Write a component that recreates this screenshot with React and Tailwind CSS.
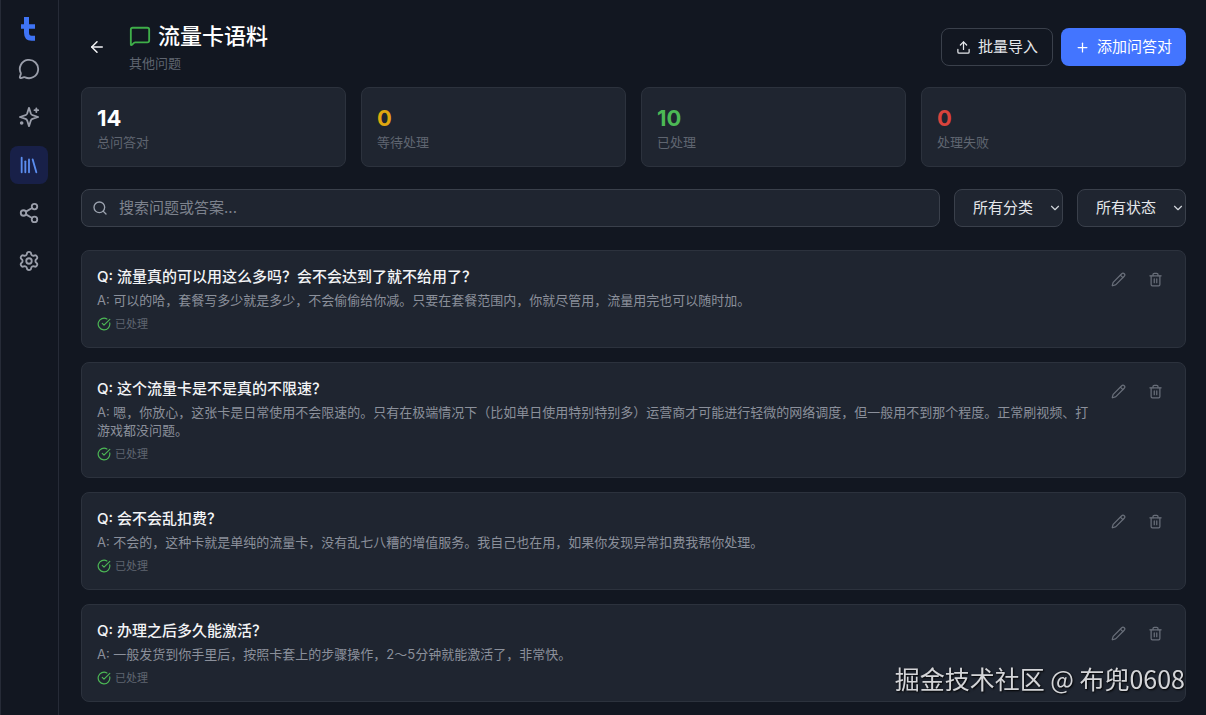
import { useState } from 'react';
import {
  ArrowLeft,
  CircleCheckBig,
  Library,
  MessageCircle,
  MessageSquare,
  Pencil,
  Plus,
  Search,
  Settings,
  Share2,
  Trash2,
  Upload,
  ChevronDown,
} from 'lucide-react';

function SparkIcon({ size = 24 }) {
  return (
    <svg
      width={size}
      height={size}
      viewBox="0 0 24 24"
      fill="none"
      stroke="currentColor"
      strokeWidth="2"
      strokeLinecap="round"
      strokeLinejoin="round"
    >
      <path d="M12 2l-2 6.200a3 3 0 0 1-1.800 1.800L2 12l6.200 2a3 3 0 0 1 1.800 1.800L12 22l2-6.200a3 3 0 0 1 1.800-1.800L22 12l-6.200-2a3 3 0 0 1-1.800-1.800Z" />
      <path d="M20 2.500v4M18 4.500h4" />
      <circle cx="4" cy="18.500" r="1" />
    </svg>
  );
}

const NAV = [
  { id: 'chat', label: '聊天', icon: MessageCircle },
  { id: 'explore', label: '探索', icon: SparkIcon },
  { id: 'library', label: '语料库', icon: Library },
  { id: 'share', label: '分享', icon: Share2 },
  { id: 'settings', label: '设置', icon: Settings },
];

const STATS = [
  { label: '总问答对', value: 14, color: 'text-white' },
  { label: '等待处理', value: 0, color: 'text-[#dfa70f]' },
  { label: '已处理', value: 10, color: 'text-[#4cb855]' },
  { label: '处理失败', value: 0, color: 'text-[#d9433c]' },
];

const PAIRS = [
  {
    id: 1,
    q: '流量真的可以用这么多吗？会不会达到了就不给用了？',
    a: '可以的哈，套餐写多少就是多少，不会偷偷给你减。只要在套餐范围内，你就尽管用，流量用完也可以随时加。',
  },
  {
    id: 2,
    q: '这个流量卡是不是真的不限速？',
    a: '嗯，你放心，这张卡是日常使用不会限速的。只有在极端情况下（比如单日使用特别特别多）运营商才可能进行轻微的网络调度，但一般用不到那个程度。正常刷视频、打游戏都没问题。',
  },
  {
    id: 3,
    q: '会不会乱扣费？',
    a: '不会的，这种卡就是单纯的流量卡，没有乱七八糟的增值服务。我自己也在用，如果你发现异常扣费我帮你处理。',
  },
  {
    id: 4,
    q: '办理之后多久能激活？',
    a: '一般发货到你手里后，按照卡套上的步骤操作，2～5分钟就能激活了，非常快。',
  },
];

function Logo() {
  return (
    <svg viewBox="0 0 16 24" className="h-6 w-4" fill="none" stroke="#3f74f6" strokeWidth="5">
      <path d="M5.500 0v15.500c0 4 2 5.700 5 5.700h3.500" />
      <path d="M0 9.500h14" strokeWidth="4.500" />
    </svg>
  );
}

function Sidebar() {
  return (
    <aside className="flex w-[59px] shrink-0 flex-col items-center border-x border-[#262b37] pt-[17px] pr-[2px]">
      <Logo />
      <nav className="mt-[9px] flex flex-col gap-[10px]">
        {NAV.map(({ id, label, icon: Icon }) => (
          <button
            key={id}
            aria-label={label}
            className={`flex size-[38px] items-center justify-center rounded-lg ${id === 'library' ? 'bg-[#182048] text-[#5b8def]' : 'text-[#9a9eaa]'}`}
          >
            <Icon size={22} />
          </button>
        ))}
      </nav>
    </aside>
  );
}

function FilterSelect({ label, value, onChange, options }) {
  return (
    <div className="relative w-[109px] shrink-0">
      <select
        aria-label={label}
        value={value}
        onChange={(e) => onChange(e.target.value)}
        className="h-[38px] w-full appearance-none rounded-lg border border-[#3a404b] bg-[#1f2530] pl-[18px] text-[15px] text-[#e5e7eb]"
      >
        {options.map((o) => (
          <option key={o}>{o}</option>
        ))}
      </select>
      <ChevronDown size={14} className="pointer-events-none absolute right-px top-[12px] text-[#d1d5db]" />
    </div>
  );
}

function PairCard({ pair }) {
  return (
    <li className="flex rounded-lg border border-[#2c323d] bg-[#1f2530] p-[15px]">
      <div className="min-w-0 flex-1">
        <h3 className="text-[15px] leading-[22px] font-medium text-[#f3f4f6]">{`Q: ${pair.q}`}</h3>
        <p className="mt-[3px] text-[13px] leading-[18px] text-[#8b909b]">{`A: ${pair.a}`}</p>
        <div className="mt-[7px] flex items-center gap-1 text-[11px] leading-4 text-[#5f6570]">
          <CircleCheckBig size={14} className="text-[#4cb855]" />
          <span>已处理</span>
        </div>
      </div>
      <div className="ml-2 flex shrink-0 items-start gap-[7px] text-[#686e79]">
        <button aria-label="编辑" className="flex h-[26px] w-[30px] items-center justify-center">
          <Pencil size={15} />
        </button>
        <button aria-label="删除" className="flex h-[26px] w-[30px] items-center justify-center">
          <Trash2 size={15} />
        </button>
      </div>
    </li>
  );
}

export default function App() {
  const [keyword, setKeyword] = useState('');
  const [category, setCategory] = useState('所有分类');
  const [status, setStatus] = useState('所有状态');

  const pairs = PAIRS.filter((p) => p.q.includes(keyword) || p.a.includes(keyword));

  return (
    <div className="flex min-h-screen bg-[#121721] font-['Inter','Noto_Sans_CJK_SC',sans-serif] text-white">
      <Sidebar />
      <main className="min-w-0 flex-1 pt-[22px] pr-5 pb-3 pl-[22px]">
        <header className="flex items-center justify-between">
          <div className="flex items-center">
            <button aria-label="返回" className="flex size-8 items-center justify-center text-[#f3f4f6]">
              <ArrowLeft size={18} />
            </button>
            <div className="ml-4">
              <h1 className="flex items-center gap-[7px] text-[22px] leading-7 font-medium">
                <MessageSquare size={22} className="text-[#3fae49]" />
                流量卡语料
              </h1>
              <p className="mt-1 text-[13px] leading-[18px] text-[#5f6570]">其他问题</p>
            </div>
          </div>
          <div className="flex gap-2">
            <button className="flex h-[38px] items-center gap-[7px] rounded-lg border border-[#3a404b] px-[14px] text-[15px] text-[#e5e7eb]">
              <Upload size={15} />
              批量导入
            </button>
            <button className="flex h-[38px] items-center gap-[7px] rounded-lg bg-[#4375ff] px-[14px] text-[15px] text-white">
              <Plus size={15} />
              添加问答对
            </button>
          </div>
        </header>

        <section className="mt-[15px] grid grid-cols-4 gap-[15px]">
          {STATS.map((s) => (
            <div key={s.label} className="rounded-lg border border-[#2c323d] bg-[#1f2530] p-[15px]">
              <div className={`text-[22px] leading-[30px] font-bold ${s.color}`}>{s.value}</div>
              <div className="text-[13px] leading-[18px] text-[#5f6570]">{s.label}</div>
            </div>
          ))}
        </section>

        <section className="mt-[22px] flex gap-[14px]">
          <label className="flex h-[38px] min-w-0 flex-1 items-center gap-[11px] rounded-lg border border-[#3a404b] bg-[#1f2530] px-[10px]">
            <Search size={16} className="shrink-0 text-[#9ca3af]" />
            <input
              aria-label="搜索"
              value={keyword}
              onChange={(e) => setKeyword(e.target.value)}
              placeholder="搜索问题或答案..."
              className="min-w-0 flex-1 bg-transparent text-[15px] outline-none placeholder:text-[#7d828d]"
            />
          </label>
          <FilterSelect label="分类" value={category} onChange={setCategory} options={['所有分类', '其他问题']} />
          <FilterSelect label="状态" value={status} onChange={setStatus} options={['所有状态', '等待处理', '已处理', '处理失败']} />
        </section>

        <ul className="mt-[23px] flex flex-col gap-[14px]">
          {pairs.map((p) => (
            <PairCard key={p.id} pair={p} />
          ))}
        </ul>
      </main>
      <div className="pointer-events-none fixed right-[21px] bottom-[19px] font-['Noto_Sans_CJK_SC',sans-serif] text-[25px] leading-9 text-[#d4d5d8] [text-shadow:1px_1px_2px_#000]">
        掘金技术社区 @ 布兜0608
      </div>
    </div>
  );
}
